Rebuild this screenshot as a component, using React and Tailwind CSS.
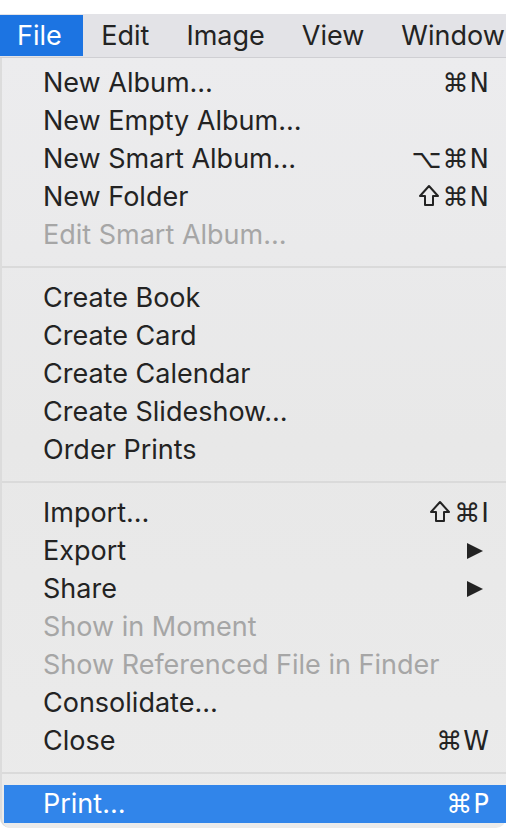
import React from 'react';

const Shift = () => (
  <svg width="22" height="24" viewBox="0 0 22 24" className="inline-block mr-[3px] -mt-[3px]">
    <path d="M11 2 L20 12 H15 V21 H7 V12 H2 Z" fill="none" stroke="currentColor" strokeWidth="2" strokeLinejoin="round" />
  </svg>
);

const groups = [
  [
    { label: 'New Album…', keys: '⌘N' },
    { label: 'New Empty Album…' },
    { label: 'New Smart Album…', keys: '⌥⌘N' },
    { label: 'New Folder', keys: '⌘N', shift: true },
    { label: 'Edit Smart Album…', disabled: true },
  ],
  [
    { label: 'Create Book' },
    { label: 'Create Card' },
    { label: 'Create Calendar' },
    { label: 'Create Slideshow…' },
    { label: 'Order Prints' },
  ],
  [
    { label: 'Import…', keys: '⌘I', shift: true },
    { label: 'Export', submenu: true },
    { label: 'Share', submenu: true },
    { label: 'Show in Moment', disabled: true },
    { label: 'Show Referenced File in Finder', disabled: true },
    { label: 'Consolidate…' },
    { label: 'Close', keys: '⌘W' },
  ],
  [{ label: 'Print…', keys: '⌘P', active: true }],
];

const MenuItem = ({ item }) => {
  const color = item.active
    ? 'text-white bg-[#3185ea]'
    : item.disabled
    ? 'text-[#a6a6a6]'
    : 'text-[#232323]';
  return (
    <div className={`h-[38px] ml-[2px] pl-[39px] pr-[16px] flex items-center justify-between ${color}`}>
      <span>{item.label}</span>
      {item.keys && (
        <span className="flex items-center font-['DejaVu_Sans',sans-serif] text-[26px] tracking-[1px]">
          {item.shift && <Shift />}
          {item.keys}
        </span>
      )}
      {item.submenu && (
        <svg width="18" height="18" viewBox="0 0 18 18" className="mr-[6px]">
          <path d="M1 1 L17 9 L1 17 Z" fill="#232323" />
        </svg>
      )}
    </div>
  );
};

const App = () => {
  const bar = ['File', 'Edit', 'Image', 'View', 'Window'];
  return (
    <div className="w-[506px] h-[829px] overflow-hidden bg-white font-['Inter',sans-serif] text-[27px]">
      <div className="h-[14px] bg-white" />
      <div className="h-[44px] flex items-center bg-[#e3e3e7] border-b border-[#cfcfd3] text-[#232323] whitespace-nowrap pt-[2px]">
        {bar.map((m, i) => (
          <div
            key={m}
            className={`h-full flex items-center ${i === 0 ? 'bg-[#1c74e2] text-white pl-[17px] pr-[21px] -mt-[2px] pt-[2px] h-[44px]' : 'px-[18.5px]'}`}
          >
            {m}
          </div>
        ))}
      </div>
      <div className="bg-gradient-to-b from-[#ececee] via-[#e8e8e8] to-[#ebebeb] pt-[6px] rounded-b-[10px] h-[770px] border-l-2 border-[#dcdcdc]">
        {groups.map((g, gi) => (
          <div key={gi}>
            {gi > 0 && (
              <div className="h-[25px] flex items-center">
                <div className="w-full h-[2px] bg-[#dadada]" />
              </div>
            )}
            {g.map((item) => (
              <MenuItem key={item.label} item={item} />
            ))}
          </div>
        ))}
      </div>
    </div>
  );
};

export default App;
